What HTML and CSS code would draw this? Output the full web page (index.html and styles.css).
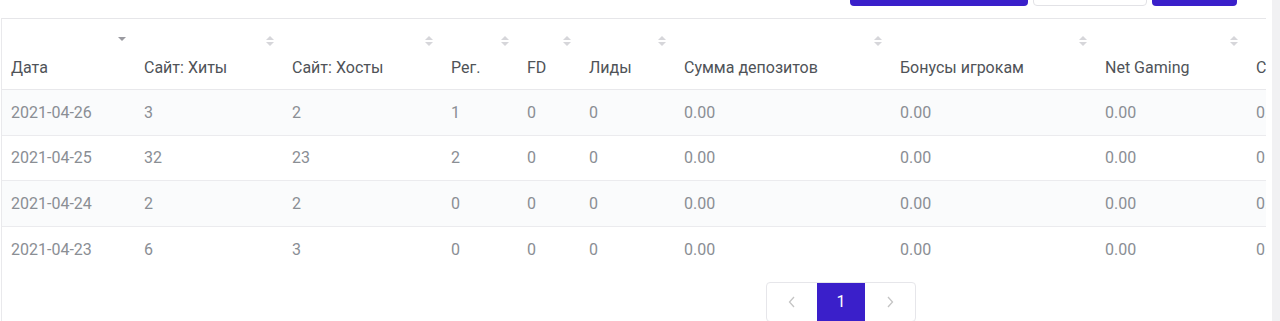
FILE: index.html
```html
<!DOCTYPE html>
<html lang="ru">
<head>
<meta charset="utf-8">
<link rel="stylesheet" href="styles.css">
</head>
<body>
<div class="page">
  <main class="main">
    <div class="toolbar">
      <span class="btn btn-primary btn-wide"></span>
      <span class="btn btn-default"></span>
      <span class="btn btn-primary btn-small"></span>
    </div>
    <section class="card">
      <div class="table-wrap">
        <table class="stats">
          <colgroup>
            <col class="c1"><col class="c2"><col class="c3"><col class="c4"><col class="c5"><col class="c6"><col class="c7"><col class="c8"><col class="c9"><col class="c10">
          </colgroup>
          <thead>
            <tr>
              <th><div class="th-in"><span class="sort active"><i class="down"></i></span><span class="label">Дата</span></div></th>
              <th><div class="th-in"><span class="sort"><i class="up"></i><i class="down"></i></span><span class="label">Сайт: Хиты</span></div></th>
              <th><div class="th-in"><span class="sort"><i class="up"></i><i class="down"></i></span><span class="label">Сайт: Хосты</span></div></th>
              <th><div class="th-in"><span class="sort"><i class="up"></i><i class="down"></i></span><span class="label">Рег.</span></div></th>
              <th><div class="th-in"><span class="sort"><i class="up"></i><i class="down"></i></span><span class="label">FD</span></div></th>
              <th><div class="th-in"><span class="sort"><i class="up"></i><i class="down"></i></span><span class="label">Лиды</span></div></th>
              <th><div class="th-in"><span class="sort"><i class="up"></i><i class="down"></i></span><span class="label">Сумма депозитов</span></div></th>
              <th><div class="th-in"><span class="sort"><i class="up"></i><i class="down"></i></span><span class="label">Бонусы игрокам</span></div></th>
              <th><div class="th-in"><span class="sort"><i class="up"></i><i class="down"></i></span><span class="label">Net Gaming</span></div></th>
              <th><div class="th-in"><span class="sort"><i class="up"></i><i class="down"></i></span><span class="label">Сумма выводов</span></div></th>
            </tr>
          </thead>
          <tbody>
            <tr><td>2021-04-26</td><td>3</td><td>2</td><td>1</td><td>0</td><td>0</td><td>0.00</td><td>0.00</td><td>0.00</td><td>0.00</td></tr>
            <tr><td>2021-04-25</td><td>32</td><td>23</td><td>2</td><td>0</td><td>0</td><td>0.00</td><td>0.00</td><td>0.00</td><td>0.00</td></tr>
            <tr><td>2021-04-24</td><td>2</td><td>2</td><td>0</td><td>0</td><td>0</td><td>0.00</td><td>0.00</td><td>0.00</td><td>0.00</td></tr>
            <tr><td>2021-04-23</td><td>6</td><td>3</td><td>0</td><td>0</td><td>0</td><td>0.00</td><td>0.00</td><td>0.00</td><td>0.00</td></tr>
          </tbody>
        </table>
      </div>
      <nav class="pager">
        <ul class="pagination">
          <li class="pg-item"><svg width="8" height="12" viewBox="0 0 8 12"><path d="M6 1 L1.5 6 L6 11" fill="none" stroke="#c4c4c4" stroke-width="1.3"/></svg></li>
          <li class="pg-item active">1</li>
          <li class="pg-item"><svg width="8" height="12" viewBox="0 0 8 12"><path d="M2 1 L6.5 6 L2 11" fill="none" stroke="#c4c4c4" stroke-width="1.3"/></svg></li>
        </ul>
      </nav>
    </section>
  </main>
  <div class="scrollbar"></div>
</div>
</body>
</html>
```

FILE: styles.css
```css
* { box-sizing: border-box; }
html, body { margin: 0; padding: 0; background: #fff; }
body {
  font-family: Roboto, "Noto Sans", "Liberation Sans", sans-serif;
  font-size: 16px;
  width: 1280px;
  height: 321px;
  overflow: hidden;
}
.page {
  display: flex;
  height: 321px;
}
.main {
  width: 1266px;
  display: flex;
  flex-direction: column;
}
.scrollbar {
  margin-left: auto;
  width: 8px;
  background: #f1f1f3;
}
.toolbar {
  flex: none;
  height: 6px;
  overflow: hidden;
  display: flex;
  justify-content: flex-end;
  align-items: flex-end;
  gap: 5px;
  padding-right: 29px;
  margin-bottom: 12px;
}
.btn {
  display: block;
  height: 36px;
  border-radius: 4px;
  flex: none;
}
.btn-primary { background: #3a1fca; }
.btn-wide { width: 178px; }
.btn-small { width: 85px; }
.btn-default {
  width: 114px;
  background: #fff;
  border: 1px solid #e2e2e6;
}
.card {
  flex: 1 0 auto;
  border-top: 1px solid #e6e6e9;
  border-left: 1px solid #e9e9ec;
  margin-left: 1px;
  display: flex;
  flex-direction: column;
}
.table-wrap {
  overflow: hidden;
  width: 100%;
}
.stats {
  table-layout: fixed;
  border-collapse: collapse;
  width: 1400px;
}
.c1 { width: 133px; }
.c2 { width: 148px; }
.c3 { width: 159px; }
.c4 { width: 76px; }
.c5 { width: 62px; }
.c6 { width: 95px; }
.c7 { width: 216px; }
.c8 { width: 205px; }
.c9 { width: 151px; }
.c10 { width: 155px; }
.stats th {
  height: 70px;
  padding: 0 10px 0 9px;
  font-weight: 400;
  color: #4f5358;
  text-align: left;
  border-bottom: 1px solid #e8e8eb;
  vertical-align: top;
  white-space: nowrap;
}
.th-in {
  display: flex;
  flex-direction: column;
  height: 70px;
}
.sort {
  align-self: flex-end;
  display: flex;
  flex-direction: column;
  align-items: center;
  gap: 2px;
  height: 10px;
  margin-top: 17px;
  margin-right: -1px;
  width: 8px;
}
.sort i {
  display: block;
  width: 0;
  height: 0;
  border-left: 4px solid transparent;
  border-right: 4px solid transparent;
}
.sort .up { border-bottom: 4px solid #d6d6da; }
.sort .down { border-top: 4px solid #d6d6da; }
.sort.active { justify-content: flex-end; margin-top: 14px; height: 8px; }
.sort.active .down { border-top-color: #9a9aa0; }
.label {
  margin-top: auto;
  margin-bottom: 12px;
  line-height: 19px;
}
.stats td {
  height: 45.5px;
  padding: 0 10px 0 9px;
  color: #8a8e94;
  white-space: nowrap;
  border-bottom: 1px solid #ebebee;
  vertical-align: middle;
  line-height: 19px;
}
.stats tbody tr:nth-child(odd) td { background: #fafbfc; }
.stats tbody tr:last-child td { border-bottom: none; }
.pager {
  margin-top: 10px;
  padding-left: 764px;
}
.pagination {
  list-style: none;
  margin: 0;
  padding: 0;
  display: flex;
  border: 1px solid #e6e6ea;
  border-radius: 4px;
  width: 150px;
  height: 40px;
  overflow: hidden;
}
.pg-item {
  display: flex;
  align-items: center;
  justify-content: center;
  width: 51px;
  color: #b5b5ba;
}
.pg-item.active {
  width: 48px;
  background: #3a1fca;
  color: #fff;
  font-size: 16px;
}
```
